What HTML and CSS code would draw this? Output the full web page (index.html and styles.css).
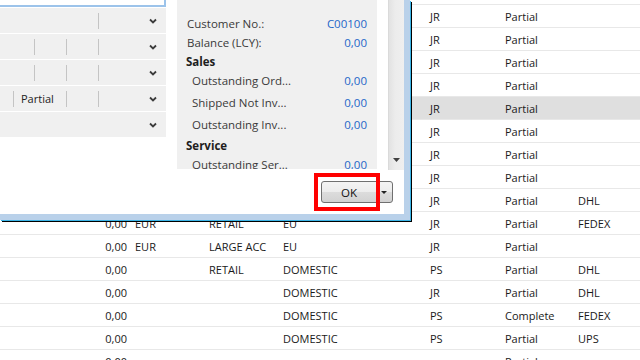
FILE: index.html
```html
<!DOCTYPE html>
<html lang="en">
<head>
  <meta charset="UTF-8">
  <meta name="viewport" content="width=device-width,initial-scale=1.0">
  <title>Customer List</title>
  <link rel="stylesheet" href="styles.css">
</head>
<body>
  <div class="screen">
    <!-- customer list behind the dialog (left columns of the top rows are covered) -->
    <div class="list">
      <div class="row"><span class="amt"></span><span class="cur"></span><span></span><span></span><span></span><span></span><span></span></div>
      <div class="row"><span class="amt"></span><span class="cur"></span><span></span><span></span><span>JR</span><span>Partial</span><span></span></div>
      <div class="row"><span class="amt"></span><span class="cur"></span><span></span><span></span><span>JR</span><span>Partial</span><span></span></div>
      <div class="row"><span class="amt"></span><span class="cur"></span><span></span><span></span><span>JR</span><span>Partial</span><span></span></div>
      <div class="row"><span class="amt"></span><span class="cur"></span><span></span><span></span><span>JR</span><span>Partial</span><span></span></div>
      <div class="row selected"><span class="amt"></span><span class="cur"></span><span></span><span></span><span>JR</span><span>Partial</span><span></span></div>
      <div class="row"><span class="amt"></span><span class="cur"></span><span></span><span></span><span>JR</span><span>Partial</span><span></span></div>
      <div class="row"><span class="amt"></span><span class="cur"></span><span></span><span></span><span>JR</span><span>Partial</span><span></span></div>
      <div class="row"><span class="amt"></span><span class="cur"></span><span></span><span></span><span>JR</span><span>Partial</span><span></span></div>
      <div class="row"><span class="amt"></span><span class="cur"></span><span></span><span></span><span>JR</span><span>Partial</span><span>DHL</span></div>
      <div class="row"><span class="amt">0,00</span><span class="cur">EUR</span><span>RETAIL</span><span>EU</span><span>JR</span><span>Partial</span><span>FEDEX</span></div>
      <div class="row"><span class="amt">0,00</span><span class="cur">EUR</span><span>LARGE ACC</span><span>EU</span><span>JR</span><span>Partial</span><span></span></div>
      <div class="row"><span class="amt">0,00</span><span class="cur"></span><span>RETAIL</span><span>DOMESTIC</span><span>PS</span><span>Partial</span><span>DHL</span></div>
      <div class="row"><span class="amt">0,00</span><span class="cur"></span><span></span><span>DOMESTIC</span><span>JR</span><span>Partial</span><span>DHL</span></div>
      <div class="row"><span class="amt">0,00</span><span class="cur"></span><span></span><span>DOMESTIC</span><span>PS</span><span>Complete</span><span>FEDEX</span></div>
      <div class="row"><span class="amt">0,00</span><span class="cur"></span><span></span><span>DOMESTIC</span><span>PS</span><span>Partial</span><span>UPS</span></div>
      <div class="row"><span class="amt">0,00</span><span class="cur"></span><span></span><span></span><span></span><span>Partial</span><span></span></div>
    </div>

    <!-- modal dialog -->
    <div class="dialog">
      <div class="dlg-body">
        <div class="fields">
          <div class="focus"></div>
          <div class="frow">
            <span class="c1"></span><span class="c2"></span><span class="c3"></span><span class="c4"></span><span class="c5 bl"></span>
            <span class="drop"><svg width="8" height="6" viewBox="0 0 8 6"><path d="M1 1.5 L4 4.5 L7 1.5" fill="none" stroke="#3c3c3c" stroke-width="1.8"/></svg></span>
          </div>
          <div class="frow">
            <span class="c1"></span><span class="c2"></span><span class="c3 bl"></span><span class="c4 bl"></span><span class="c5 bl"></span>
            <span class="drop"><svg width="8" height="6" viewBox="0 0 8 6"><path d="M1 1.5 L4 4.5 L7 1.5" fill="none" stroke="#3c3c3c" stroke-width="1.8"/></svg></span>
          </div>
          <div class="frow">
            <span class="c1"></span><span class="c2"></span><span class="c3 bl"></span><span class="c4 bl"></span><span class="c5 bl"></span>
            <span class="drop"><svg width="8" height="6" viewBox="0 0 8 6"><path d="M1 1.5 L4 4.5 L7 1.5" fill="none" stroke="#3c3c3c" stroke-width="1.8"/></svg></span>
          </div>
          <div class="frow">
            <span class="c1"></span><span class="c23 bl">Partial</span><span class="c4 bl"></span><span class="c5 bl"></span>
            <span class="drop"><svg width="8" height="6" viewBox="0 0 8 6"><path d="M1 1.5 L4 4.5 L7 1.5" fill="none" stroke="#3c3c3c" stroke-width="1.8"/></svg></span>
          </div>
          <div class="frow">
            <span class="c1"></span><span class="c2"></span><span class="c3"></span><span class="c4"></span><span class="c5"></span>
            <span class="drop"><svg width="8" height="6" viewBox="0 0 8 6"><path d="M1 1.5 L4 4.5 L7 1.5" fill="none" stroke="#3c3c3c" stroke-width="1.8"/></svg></span>
          </div>
        </div>

        <div class="factbox">
          <div class="fb-line"><span>Customer No.:</span><span class="val">C00100</span></div>
          <div class="fb-line"><span>Balance (LCY):</span><span class="val">0,00</span></div>
          <div class="fb-head">Sales</div>
          <div class="fb-group">
            <div class="fb-line sub"><span>Outstanding Ord...</span><span class="val">0,00</span></div>
            <div class="fb-line sub"><span>Shipped Not Inv...</span><span class="val">0,00</span></div>
            <div class="fb-line sub"><span>Outstanding Inv...</span><span class="val">0,00</span></div>
          </div>
          <div class="fb-head">Service</div>
          <div class="fb-group">
            <div class="fb-line sub"><span>Outstanding Ser...</span><span class="val">0,00</span></div>
          </div>
        </div>

        <div class="vscroll">
          <svg width="7" height="4" viewBox="0 0 7 4"><path d="M0 0 H7 L3.5 4 Z" fill="#404040"/></svg>
        </div>
      </div>

      <div class="dlg-actions">
        <button class="ok">
          <span class="ok-label">OK</span>
          <span class="ok-caret"><svg width="6" height="3" viewBox="0 0 6 3"><path d="M0 0 H6 L3 3 Z" fill="#222"/></svg></span>
        </button>
        <div class="mark"></div>
      </div>
    </div>
  </div>
</body>
</html>
```

FILE: styles.css
```css
/* ——— page ——— */
body {
  margin:0; background:#fff;
  font-family:"Open Sans","Segoe UI",sans-serif; color:#1a1a1a;
}
.screen {
  position:relative; width:640px; height:360px; overflow:hidden;
}

/* ——— list in the background ——— */
.list { margin-top:-18px; font-size:11px; }
.row {
  display:grid; height:22px; align-items:center;
  grid-template-columns:127px 82px 74px 147px 75px 73px 1fr;
  border-bottom:1px solid #e8e8e8; white-space:nowrap;
}
.row.selected { background:#dfdfdf; }
.row .amt { text-align:right; }
.row .cur { padding-left:8px; }

/* ——— dialog ——— */
.dialog {
  position:absolute; left:0; top:0; z-index:2;
  width:404px; height:214px; background:#fff;
  border-right:6px solid #b9d1ea; border-bottom:6px solid #b9d1ea;
  box-shadow:1px 1px 0 #3bb4e6, 2px 2px 0 #000;
}
.dlg-body { display:flex; height:170px; }

.fields { width:166px; font-size:11px; }
.focus {
  height:5px; border-right:2px solid #9cc3ea; border-bottom:2px solid #9cc3ea;
  margin-bottom:1px;
}
.frow {
  display:grid; height:25px; margin-bottom:1px; align-items:center;
  grid-template-columns:13px 21px 32px 32px 48px 20px;
  background:#f0f0f0;
}
.frow > span { height:16px; display:flex; align-items:center; }
.frow .bl { border-left:1px solid #c4c4c4; }
.frow .c23 { grid-column:span 2; padding-left:7px; color:#222; }
.frow .drop { justify-content:flex-start; padding-left:3px; }

.factbox {
  width:180px; height:155px; margin-left:11px; padding:14px 10px 0 10px;
  background:#f0f0f0; font-size:11.5px; color:#3a3a3a; overflow:hidden;
}
.fb-line { display:flex; justify-content:space-between; line-height:19px; white-space:nowrap; }
.fb-line.sub { padding-left:5px; }
.fb-line .val { color:#1e66c8; }
.fb-head { line-height:19px; font-weight:bold; color:#1e1e1e; margin-left:-1px; }
.fb-group { display:flex; flex-direction:column; gap:3px; padding-bottom:2px; }

.vscroll {
  width:15px; height:170px; margin-left:11px;
  background:linear-gradient(to right,#e2e2e2,#ececec 40%,#efefef);
  border-left:1px solid #dadada;
  display:flex; align-items:flex-end; justify-content:center;
}
.vscroll svg { margin-bottom:8px; }

/* ——— action bar ——— */
.dlg-actions {
  position:relative; height:44px;
  display:flex; justify-content:flex-end; align-items:flex-start;
  padding-right:11px;
}
.ok {
  margin-top:11px; width:72px; height:22px; padding:0;
  display:flex; align-items:center;
  border:1px solid #707070; border-radius:3px;
  background:linear-gradient(#f4f4f4,#ececec 50%,#dcdcdc 51%,#d2d2d2);
  font-family:inherit; font-size:11.5px; color:#111;
}
.ok-label { width:54px; text-align:center; }
.ok-caret { flex:1; display:flex; justify-content:center; }

/* red highlight drawn over the OK button */
.mark {
  position:absolute; left:314px; top:3px; width:66px; height:38px;
  box-sizing:border-box; border:4px solid #ff0000;
}
```
